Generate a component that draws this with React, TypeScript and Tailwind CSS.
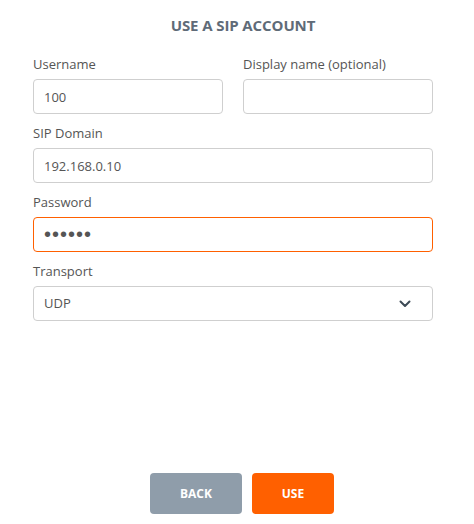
import { useState } from 'react'

const Field = ({ label, children }: { label: string; children: React.ReactNode }) => (
  <div className="flex flex-col">
    <label className="h-[18px] mb-[6px] text-[13px] leading-[18px] text-[#555]">{label}</label>
    {children}
  </div>
)

const boxClass = 'h-[35px] w-full rounded-[4px] border bg-white px-[10px] text-[#555] outline-none'
const inputClass = `${boxClass} border-[#cfcfcf] text-[13px]`

export default function App() {
  const [username, setUsername] = useState('100')
  const [displayName, setDisplayName] = useState('')
  const [domain, setDomain] = useState('192.168.0.10')
  const [password, setPassword] = useState('123456')

  return (
    <div className="flex flex-col h-[524px] w-[474px] bg-white font-['Open_Sans',sans-serif]">
      <h1 className="mt-[15px] pl-[12px] h-[20px] text-center text-[15px] leading-[20px] font-bold tracking-[-0.1px] text-[#5f6b78]">
        USE A SIP ACCOUNT
      </h1>

      <div className="flex flex-col gap-[10px] mt-[20px] ml-[33px] w-[400px]">
        <div className="grid grid-cols-2 gap-[20px]">
          <Field label="Username">
            <input className={inputClass} value={username} onChange={e => setUsername(e.target.value)} />
          </Field>
          <Field label="Display name (optional)">
            <input className={inputClass} value={displayName} onChange={e => setDisplayName(e.target.value)} />
          </Field>
        </div>

        <Field label="SIP Domain">
          <input className={inputClass} value={domain} onChange={e => setDomain(e.target.value)} />
        </Field>

        <Field label="Password">
          <input
            type="password"
            className={`${boxClass} border-[#ff6000] text-[20px] tracking-[1px] font-['Liberation_Sans',sans-serif]`}
            value={password}
            onChange={e => setPassword(e.target.value)}
          />
        </Field>

        <Field label="Transport">
          <div className="flex items-center justify-between h-[35px] rounded-[4px] border border-[#cfcfcf] pl-[10px] pr-[21px] text-[13px] text-[#555]">
            <span>UDP</span>
            <svg width="12" height="8" viewBox="0 0 12 8" fill="none">
              <path d="M1.5 1.5 6 6l4.5-4.5" stroke="#3d4a56" strokeWidth="2" strokeLinecap="round" strokeLinejoin="round" />
            </svg>
          </div>
        </Field>
      </div>

      <div className="flex-1" />

      <div className="flex justify-center gap-[10px] pl-[10px] mb-[10px]">
        <button className="h-[41px] w-[92px] rounded-[4px] bg-[#8f9daa] text-[12px] font-bold text-white">BACK</button>
        <button className="h-[41px] w-[82px] rounded-[4px] bg-[#ff6000] text-[12px] font-bold text-white">USE</button>
      </div>
    </div>
  )
}
